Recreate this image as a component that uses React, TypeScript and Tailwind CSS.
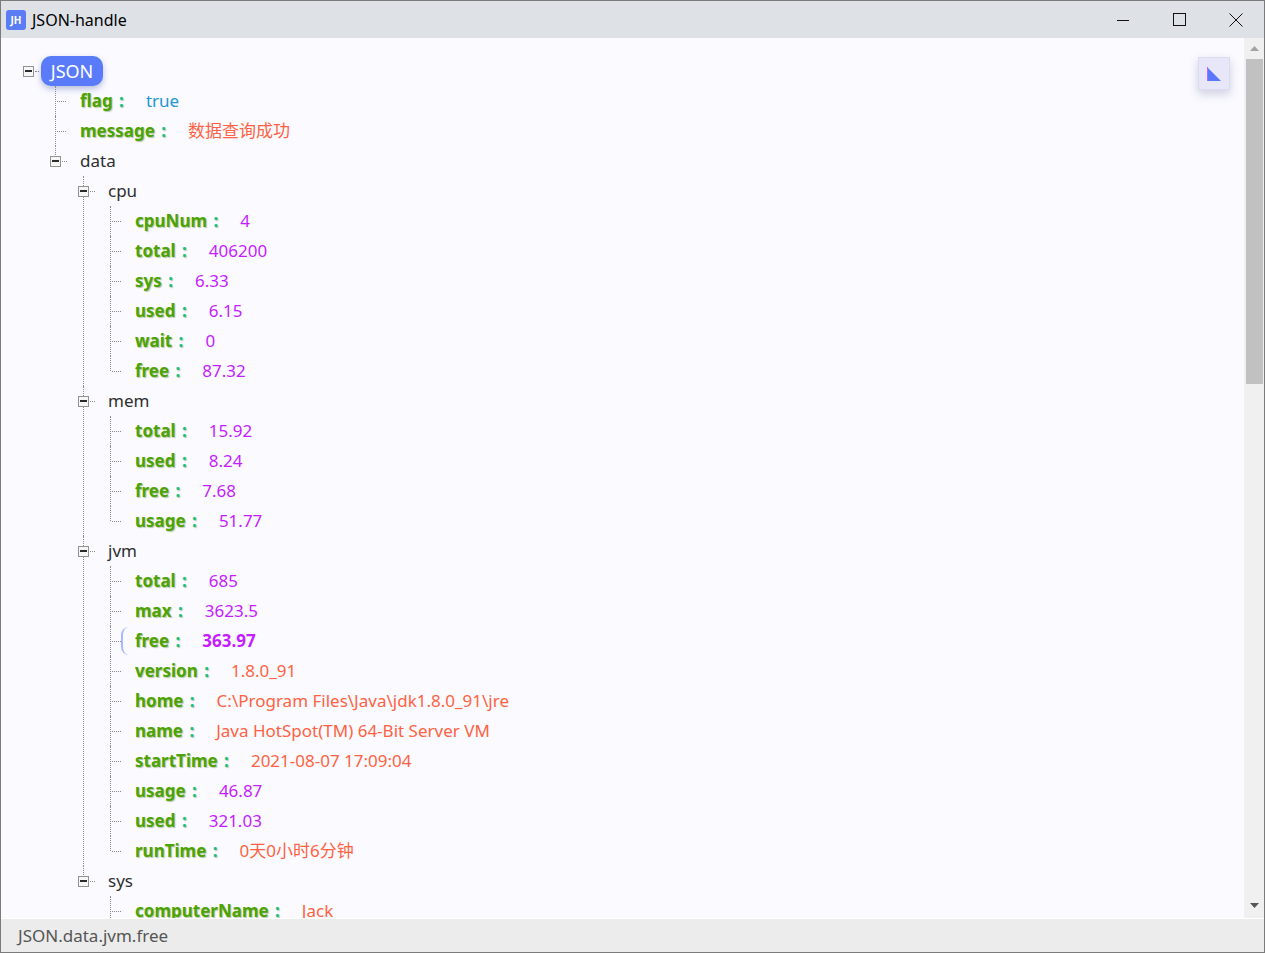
import React from "react";

type Val = string | number | boolean | { [k: string]: Val };

const json: { [k: string]: Val } = {
  flag: true,
  message: "数据查询成功",
  data: {
    cpu: { cpuNum: 4, total: 406200, sys: 6.33, used: 6.15, wait: 0, free: 87.32 },
    mem: { total: 15.92, used: 8.24, free: 7.68, usage: 51.77 },
    jvm: {
      total: 685,
      max: 3623.5,
      free: 363.97,
      version: "1.8.0_91",
      home: "C:\\Program Files\\Java\\jdk1.8.0_91\\jre",
      name: "Java HotSpot(TM) 64-Bit Server VM",
      startTime: "2021-08-07 17:09:04",
      usage: 46.87,
      used: 321.03,
      runTime: "0天0小时6分钟",
    },
    sys: {
      computerName: "Jack",
      computerIp: "192.168.1.7",
      userDir: "D:\\workspace\\ruoyi",
      osName: "Windows 10",
      osArch: "amd64",
    },
  },
};

const SELECTED = "data.jvm.free";
const indent = ["ml-[32px]", "ml-[28px]", "ml-[27px]", "ml-[28px]"];

function Toggle() {
  return (
    <span className="relative z-10 flex h-[11px] w-[11px] shrink-0 items-center justify-center border border-[#929292] bg-[#f6f6f6]">
      <span className="h-[2px] w-[7px] bg-[#2a2a2a]" />
    </span>
  );
}

function Value({ v, bold }: { v: Val; bold?: boolean }) {
  const cls =
    typeof v === "boolean" ? "text-[#2196d6]" : typeof v === "number" ? "text-[#c51dff]" : "text-[#ff6242]";
  return <span className={`ml-[22px] whitespace-pre ${cls} ${bold ? "font-bold" : ""}`}>{String(v)}</span>;
}

function Item({ name, v, last, level, path }: { name: string; v: Val; last: boolean; level: number; path: string }) {
  const isObj = typeof v === "object";
  const selected = path === SELECTED;
  return (
    <div className="relative">
      <span className={`absolute left-0 top-0 border-l border-dotted border-[#8c8c8c] ${last ? "h-[15px]" : "bottom-0"}`} />
      {isObj ? (
        <div className="flex h-[30px] items-center">
          <span className="-ml-[5px]">
            <Toggle />
          </span>
          <span className="ml-[1px] w-[5px] border-t border-dotted border-[#8c8c8c]" />
          <span className="ml-[13px] text-[#2e2e2e]">{name}</span>
        </div>
      ) : (
        <div className="relative flex h-[30px] items-center">
          <span className="ml-[2px] w-[9px] border-t border-dotted border-[#8c8c8c]" />
          {selected && (
            <span className="absolute left-[11px] top-[1px] h-[28px] w-[8px] rounded-l-full border-l-2 border-[#a9b9ff]" />
          )}
          <span className="ml-[14px] whitespace-pre font-bold text-[#4ba402] [text-shadow:1px_1px_1px_rgba(40,70,0,0.3)]">
            {name}
            <span className="ml-[2px] text-[#19c27a]"> :</span>
          </span>
          <Value v={v} bold={selected} />
        </div>
      )}
      {isObj && <Children obj={v as { [k: string]: Val }} level={level + 1} path={path} />}
    </div>
  );
}

function Children({ obj, level, path }: { obj: { [k: string]: Val }; level: number; path: string }) {
  const entries = Object.entries(obj);
  return (
    <div className={indent[level - 1]}>
      {entries.map(([k, v], i) => (
        <Item
          key={k}
          name={k}
          v={v}
          last={i === entries.length - 1}
          level={level}
          path={path ? `${path}.${k}` : k}
        />
      ))}
    </div>
  );
}

function TitleBar() {
  return (
    <div className="flex h-[37px] shrink-0 items-center bg-[#dee1e6]">
      <div className="ml-[5px] flex h-[20px] w-[20px] items-center justify-center rounded-[3px] bg-[#5b7cf5] text-[10px] font-bold leading-none text-white">
        JH
      </div>
      <span className="ml-[6px] text-[16px] text-black">JSON-handle</span>
      <div className="ml-auto flex h-full items-center">
        <div className="flex h-full w-[56px] items-center justify-center">
          <svg width="12" height="12" viewBox="0 0 12 12">
            <path d="M0 6.5h12" stroke="#111" strokeWidth="1" />
          </svg>
        </div>
        <div className="flex h-full w-[56px] items-center justify-center">
          <svg width="13" height="13" viewBox="0 0 13 13">
            <rect x="0.5" y="0.5" width="12" height="12" fill="none" stroke="#111" strokeWidth="1" />
          </svg>
        </div>
        <div className="flex h-full w-[57px] items-center justify-center">
          <svg width="14" height="14" viewBox="0 0 14 14">
            <path d="M0.5 0.5l13 13M13.5 0.5l-13 13" stroke="#111" strokeWidth="1" />
          </svg>
        </div>
      </div>
    </div>
  );
}

function Scrollbar() {
  return (
    <div className="flex w-[20px] shrink-0 flex-col items-center bg-[#f0f0f0]">
      <div className="flex h-[21px] w-full items-center justify-center">
        <svg width="9" height="5" viewBox="0 0 9 5">
          <path d="M4.5 0L9 5H0z" fill="#a3a3a3" />
        </svg>
      </div>
      <div className="ml-[1px] h-[325px] w-[17px] bg-[#c1c1c1]" />
      <div className="flex-1" />
      <div className="flex h-[21px] w-full items-center justify-center pb-[4px]">
        <svg width="9" height="5" viewBox="0 0 9 5">
          <path d="M0 0H9L4.5 5z" fill="#555" />
        </svg>
      </div>
    </div>
  );
}

export default function App() {
  return (
    <div className="flex h-[953px] w-[1265px] flex-col overflow-hidden border border-[#7b7b7b] bg-[#fafaff] font-['Noto_Sans','Noto_Sans_CJK_SC',sans-serif] text-[17px]">
      <TitleBar />
      <div className="flex min-h-0 flex-1">
        <div className="relative min-w-0 flex-1 overflow-hidden">
          <div className="pl-[22px] pt-[18px]">
            <div className="flex h-[30px] items-center">
              <Toggle />
              <span className="ml-[1px] w-[4px] border-t border-dotted border-[#8c8c8c]" />
              <span className="ml-[2px] flex h-[30px] w-[62px] items-center justify-center rounded-[10px] bg-[#5a7bf9] text-[18px] text-white shadow-[0_3px_6px_rgba(60,80,160,0.35)]">
                JSON
              </span>
            </div>
            <Children obj={json} level={1} path="" />
          </div>
          <button className="absolute right-[14px] top-[19px] flex h-[33px] w-[32px] items-center justify-center border border-[#dcdcf0] bg-[#e7e7f9] shadow-[0_4px_10px_rgba(80,80,140,0.25)]">
            <svg width="14" height="14" viewBox="0 0 14 14">
              <path d="M0 0V14H14z" fill="#5a78ff" />
              <path d="M0.5 0V14" stroke="#b06cff" strokeWidth="1" />
            </svg>
          </button>
        </div>
        <Scrollbar />
      </div>
      <div className="flex h-[34px] shrink-0 items-center border-t border-white bg-[#ececec] pl-[17px] text-[17px] text-[#555]">
        JSON.data.jvm.free
      </div>
    </div>
  );
}
